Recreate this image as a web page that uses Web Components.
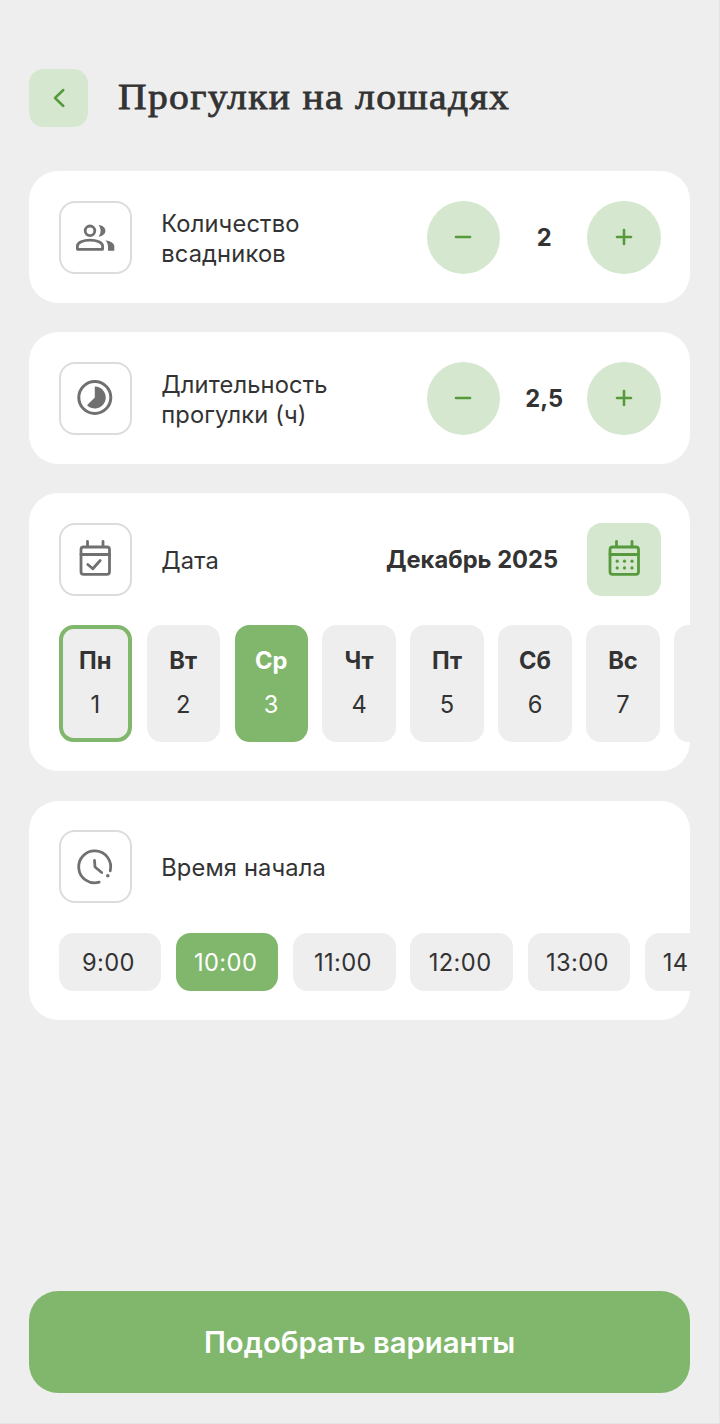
<!DOCTYPE html>
<html lang="ru"><head><meta charset="utf-8">
<style>
html,body{margin:0;padding:0;height:100%}
body{background:#eee;font-family:Inter,"Liberation Sans",sans-serif;color:#333}
</style></head><body>
<app-page>
  <top-bar slot="top">Прогулки на лошадях</top-bar>
  <info-card>
    <icon-box slot="icon" kind="users"></icon-box>
    <span slot="label">Количество<br>всадников</span>
    <num-stepper slot="end" value="2"></num-stepper>
  </info-card>
  <info-card>
    <icon-box slot="icon" kind="timer"></icon-box>
    <span slot="label">Длительность<br>прогулки (ч)</span>
    <num-stepper slot="end" value="2,5"></num-stepper>
  </info-card>
  <info-card>
    <icon-box slot="icon" kind="date"></icon-box>
    <span slot="label">Дата</span>
    <month-pick slot="end">Декабрь 2025</month-pick>
    <chip-row slot="extra">
      <day-chip today name="Пн" num="1"></day-chip>
      <day-chip name="Вт" num="2"></day-chip>
      <day-chip active name="Ср" num="3"></day-chip>
      <day-chip name="Чт" num="4"></day-chip>
      <day-chip name="Пт" num="5"></day-chip>
      <day-chip name="Сб" num="6"></day-chip>
      <day-chip name="Вс" num="7"></day-chip>
      <day-chip name="" num=""></day-chip>
    </chip-row>
  </info-card>
  <info-card>
    <icon-box slot="icon" kind="clock"></icon-box>
    <span slot="label">Время начала</span>
    <chip-row slot="extra">
      <time-chip>9:00</time-chip>
      <time-chip active>10:00</time-chip>
      <time-chip>11:00</time-chip>
      <time-chip>12:00</time-chip>
      <time-chip>13:00</time-chip>
      <time-chip>14:00</time-chip>
    </chip-row>
  </info-card>
  <main-button slot="bottom">Подобрать варианты</main-button>
</app-page>
<script>
const G='#579a3d',I='#707070',L='#d5e7cf',A='#80b76c';
function el(name,html){
  customElements.define(name,class extends HTMLElement{
    connectedCallback(){
      if(this.shadowRoot)return;
      const r=this.attachShadow({mode:'open'});
      r.innerHTML=typeof html==='function'?html(this):html;
    }
  });
}
const ICONS={
users:`<g fill="none" stroke="${I}" stroke-width="2.800"><circle cx="17" cy="15.800" r="4.800"/><path d="M4.400 34.300v-3.300c0-3.500 5.800-5.800 12.600-5.800s12.600 2.300 12.600 5.800v3.300z" stroke-linejoin="round"/></g><path fill="${I}" d="M25.500 10c3.800.2 6.900 2.600 6.900 5.800s-3.100 5.600-6.900 5.800c1.300-1.500 2.100-3.600 2.100-5.800s-.8-4.300-2.100-5.800zM32.500 25.300c4.700.9 8.800 2.700 8.800 6v4.400h-6.300v-3.700c0-2.600-1-5-2.500-6.700z"/>`,
timer:`<circle cx="21.800" cy="21.500" r="16" fill="none" stroke="${I}" stroke-width="3"/><path fill="${I}" d="M21.800 10.500a11 11 0 1 1-7.800 18.800l7.800-7.800z"/>`,
date:`<g fill="none" stroke="${I}" stroke-width="2.800" stroke-linecap="round" stroke-linejoin="round"><rect x="8" y="10" width="28.500" height="27.400" rx="2.600"/><path d="M8 17.500h28.500M14.500 4.500v5M30 4.500v5M14.800 27.500l5 4.300 7.400-8.300"/></g>`,
clock:`<g fill="none" stroke="${I}" stroke-width="2.800" stroke-linecap="round" stroke-linejoin="round"><path d="M37.200 25.800A16 16 0 1 0 26.200 37.200"/><path d="M21.500 15.500l.5 6.500 6.700 5.500"/></g><circle cx="34.800" cy="30.700" r="1.800" fill="${I}"/>`,
cal:`<g fill="none" stroke="${G}" stroke-width="2.800" stroke-linecap="round" stroke-linejoin="round"><rect x="8" y="10" width="28.500" height="27.400" rx="2.600"/><path d="M8 17.500h28.500M14.500 4.500v5M30 4.500v5"/></g><g fill="${G}"><circle cx="15.200" cy="24.200" r="1.600"/><circle cx="22.500" cy="24.200" r="1.600"/><circle cx="30" cy="24.200" r="1.600"/><circle cx="15.200" cy="30.900" r="1.600"/><circle cx="22.500" cy="30.900" r="1.600"/><circle cx="30" cy="30.900" r="1.600"/></g>`
};
const svg=(k,s=44)=>`<svg width="${s}" height="${s}" viewBox="0 0 44 44" aria-hidden="true">${ICONS[k]}</svg>`;

el('app-page',`<style>
:host{display:flex;flex-direction:column;box-sizing:border-box;height:1424px;padding:68.700px 29px 29.700px 29.300px;width:720px;overflow:hidden;border-right:1px solid #e4e4e4;border-bottom:1px solid #e4e4e4}
.cards{display:flex;flex-direction:column;gap:29.550px;margin-top:44px;flex:1}
</style><slot name="top"></slot><div class="cards"><slot></slot></div><slot name="bottom"></slot>`);

el('top-bar',`<style>
:host{display:flex;align-items:center;gap:30px;height:58.600px}
.b{width:58.600px;height:58.600px;border-radius:14.700px;background:${L};display:flex;align-items:center;justify-content:center;flex:none}
.t{font:400 36px/1.2 "Liberation Serif","DejaVu Serif",serif;color:#333;letter-spacing:1.200px;-webkit-text-stroke:.8px #333;white-space:nowrap;transform:scaleX(1.1);transform-origin:0 50%}
</style><div class="b"><svg width="16" height="20" viewBox="0 0 16 20"><path d="M12.300 2 4 10l8.300 8" fill="none" stroke="${G}" stroke-width="2.500" stroke-linecap="round" stroke-linejoin="round"/></svg></div><div class="t"><slot></slot></div>`);

el('info-card',`<style>
:host{display:block;background:#fff;border-radius:29.300px;overflow:hidden;padding:29.300px 0 28.900px 29.300px;box-sizing:border-box}
.row{display:flex;align-items:center;padding-right:29.300px;gap:29.300px}
.label{flex:1;font:400 23.700px/30px Inter,sans-serif;color:#333;letter-spacing:.15px;padding-top:3px}
</style><div class="row"><slot name="icon"></slot><div class="label"><slot name="label"></slot></div><slot name="end"></slot></div><div class="ex"><slot name="extra"></slot></div>`);

el('icon-box',h=>`<style>
:host{display:flex;align-items:center;justify-content:center;box-sizing:border-box;width:73.300px;height:73.300px;border:2px solid #dcdcdc;border-radius:16px;background:#fff;flex:none}
svg{display:block}
</style>${svg(h.getAttribute('kind'))}`);

el('num-stepper',h=>`<style>
:host{display:flex;align-items:center;flex:none}
.r{width:73.300px;height:73.300px;border-radius:50%;background:${L};display:flex;align-items:center;justify-content:center}
.v{width:87.400px;box-sizing:border-box;padding-left:1px;text-align:center;font:700 23.700px/29px Inter,sans-serif;color:#333}
</style><div class="r"><svg width="20" height="20" viewBox="0 0 20 20"><path d="M3 10h14" stroke="${G}" stroke-width="2.600" stroke-linecap="round"/></svg></div><div class="v">${h.getAttribute('value')}</div><div class="r"><svg width="20" height="20" viewBox="0 0 20 20"><path d="M3 10h14M10 3v14" stroke="${G}" stroke-width="2.600" stroke-linecap="round"/></svg></div>`);

el('month-pick',`<style>
:host{display:flex;align-items:center;gap:29.300px;flex:none}
.m{font:700 23.700px/29px Inter,sans-serif;color:#333;padding-top:1px}
.b{width:73.300px;height:73.300px;border-radius:14.700px;background:${L};display:flex;align-items:center;justify-content:center}
</style><div class="m"><slot></slot></div><div class="b">${svg('cal')}</div>`);

el('chip-row',`<style>
:host{display:flex;gap:14.660px;margin-top:29.300px;overflow:hidden}
</style><slot></slot>`);

el('day-chip',h=>{
const on=h.hasAttribute('active'),t=h.hasAttribute('today');
return `<style>
:host{display:flex;flex-direction:column;align-items:center;justify-content:center;box-sizing:border-box;flex:none;width:73.300px;height:117.200px;border-radius:14.700px;padding-bottom:2px;background:${on?A:'#eee'};color:${on?'#fff':'#333'};gap:14.500px;${t?`border:4px solid ${A};`:''}}
.a{font:700 23.700px/29.300px Inter,sans-serif}
.b{font:400 23.700px/29.300px Inter,sans-serif}
</style><div class="a">${h.getAttribute('name')}</div><div class="b">${h.getAttribute('num')}</div>`});

el('time-chip',h=>{
const on=h.hasAttribute('active');
return `<style>
:host{display:flex;align-items:center;justify-content:center;flex:none;box-sizing:border-box;width:102.600px;height:58.600px;border-radius:14.700px;padding:2px 3px 0 0;background:${on?A:'#eee'};color:${on?'#fff':'#333'};font:400 23.700px/29.300px Inter,sans-serif;letter-spacing:.4px;white-space:nowrap}
</style><slot></slot>`});

el('main-button',`<style>
:host{display:flex;align-items:center;justify-content:center;box-sizing:border-box;height:102.600px;border-radius:29.300px;padding-top:2px;background:${A};color:#fff;font:600 29.300px/36px Inter,sans-serif;flex:none}
</style><slot></slot>`);
</script>
</body></html>
